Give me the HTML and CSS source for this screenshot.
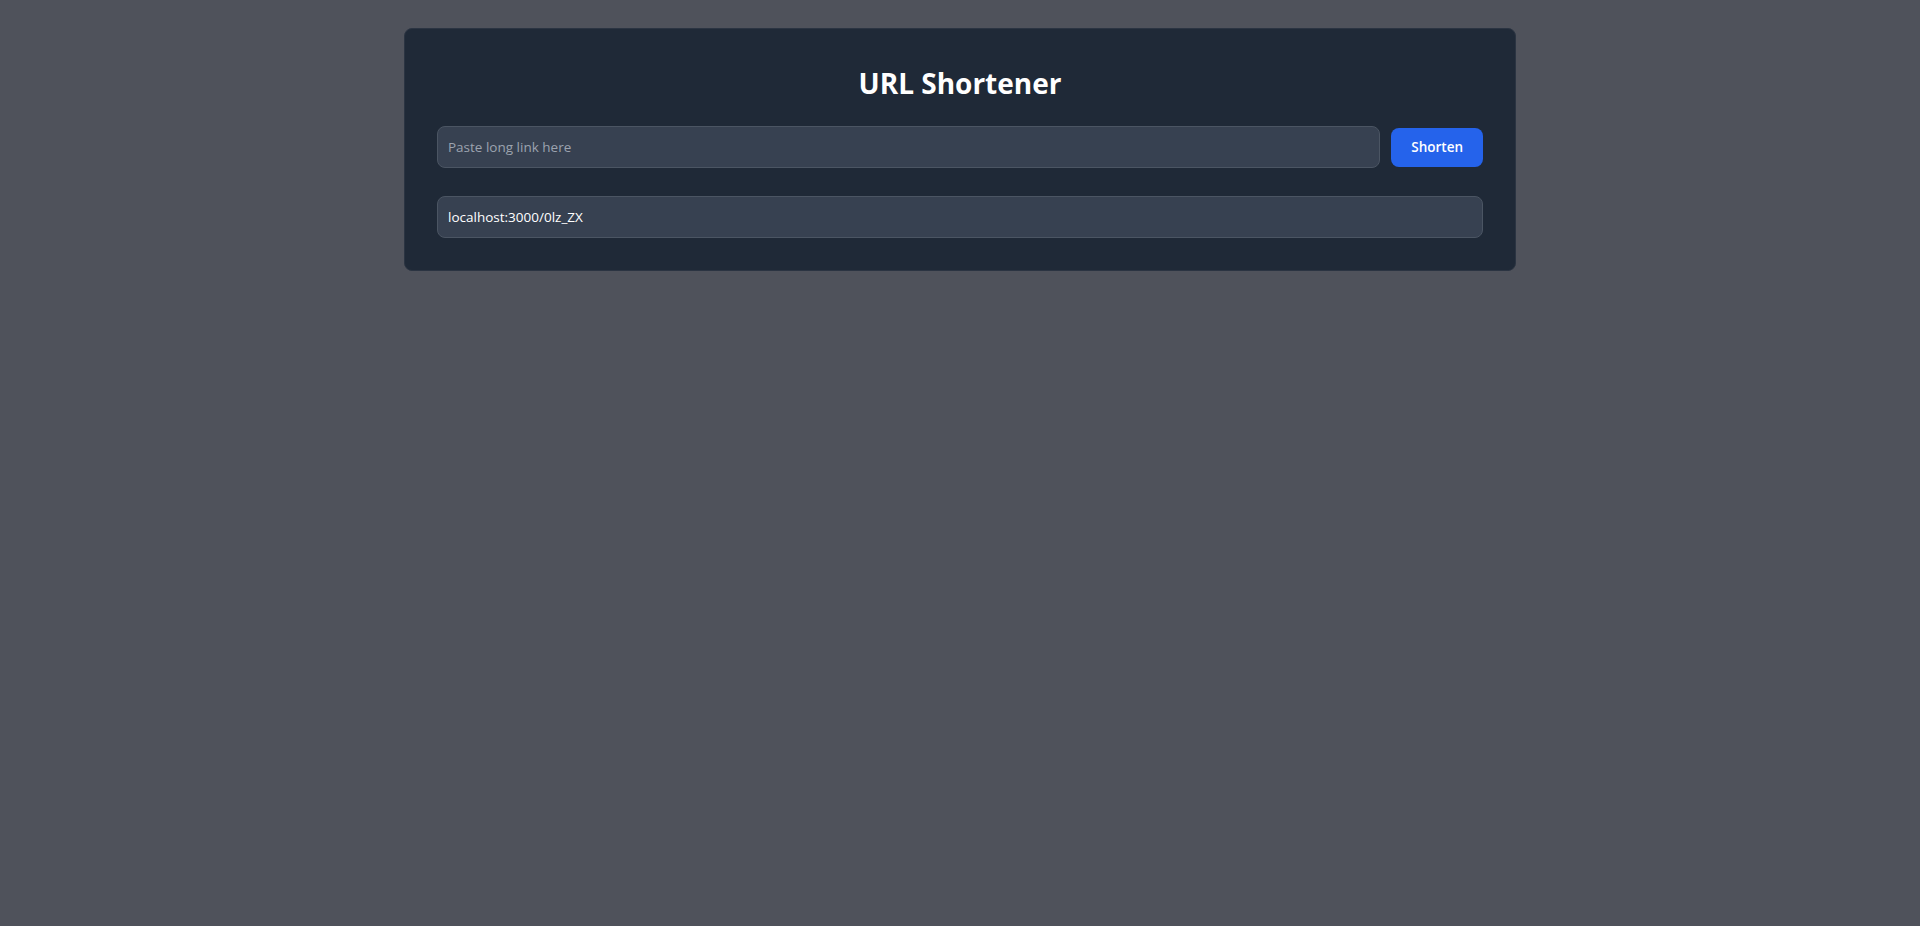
FILE: index.html
```html
<!DOCTYPE html>
<html lang="en">
<head>
<meta charset="utf-8">
<title>URL Shortener</title>
<link rel="stylesheet" href="styles.css">
</head>
<body>
<main class="page">
  <section class="card">
    <h1 class="title">URL Shortener</h1>
    <form class="row">
      <input class="field" type="text" placeholder="Paste long link here">
      <button class="btn" type="button">Shorten</button>
    </form>
    <div class="result">localhost:3000/0lz_ZX</div>
  </section>
</main>
</body>
</html>
```

FILE: styles.css
```css
* { box-sizing: border-box; }
html, body { margin: 0; padding: 0; }
html { background: #4f525b; }
body {
  background: #4f525b;
  font-family: "Open Sans", "Noto Sans", sans-serif;
  color: #ffffff;
}
.page {
  padding-top: 28px;
}
.card {
  width: 1112px;
  margin: 0 auto;
  background: #1f2937;
  border: 1px solid #2b3442;
  border-radius: 8px;
  padding: 32px;
}
.title {
  margin: 0 0 21px;
  text-align: center;
  font-size: 28px;
  line-height: 44px;
  font-weight: 700;
  color: #ffffff;
}
.row {
  display: flex;
  align-items: center;
  gap: 11px;
  margin: 0 0 28px;
}
.field {
  flex: 1;
  height: 42px;
  padding: 0 10px;
  background: #374151;
  border: 1px solid #4b5563;
  border-radius: 8px;
  color: #ffffff;
  font-family: inherit;
  font-size: 13.5px;
  outline: none;
}
.field::placeholder { color: #9ca3af; }
.btn {
  height: 39px;
  padding: 0 20px;
  background: #2563eb;
  color: #ffffff;
  border: 0;
  border-radius: 8px;
  font-family: inherit;
  font-size: 13.5px;
  font-weight: 600;
}
.result {
  height: 42px;
  display: flex;
  align-items: center;
  padding: 0 10px;
  background: #374151;
  border: 1px solid #4b5563;
  border-radius: 8px;
  font-size: 13.5px;
  color: #ffffff;
}
```
